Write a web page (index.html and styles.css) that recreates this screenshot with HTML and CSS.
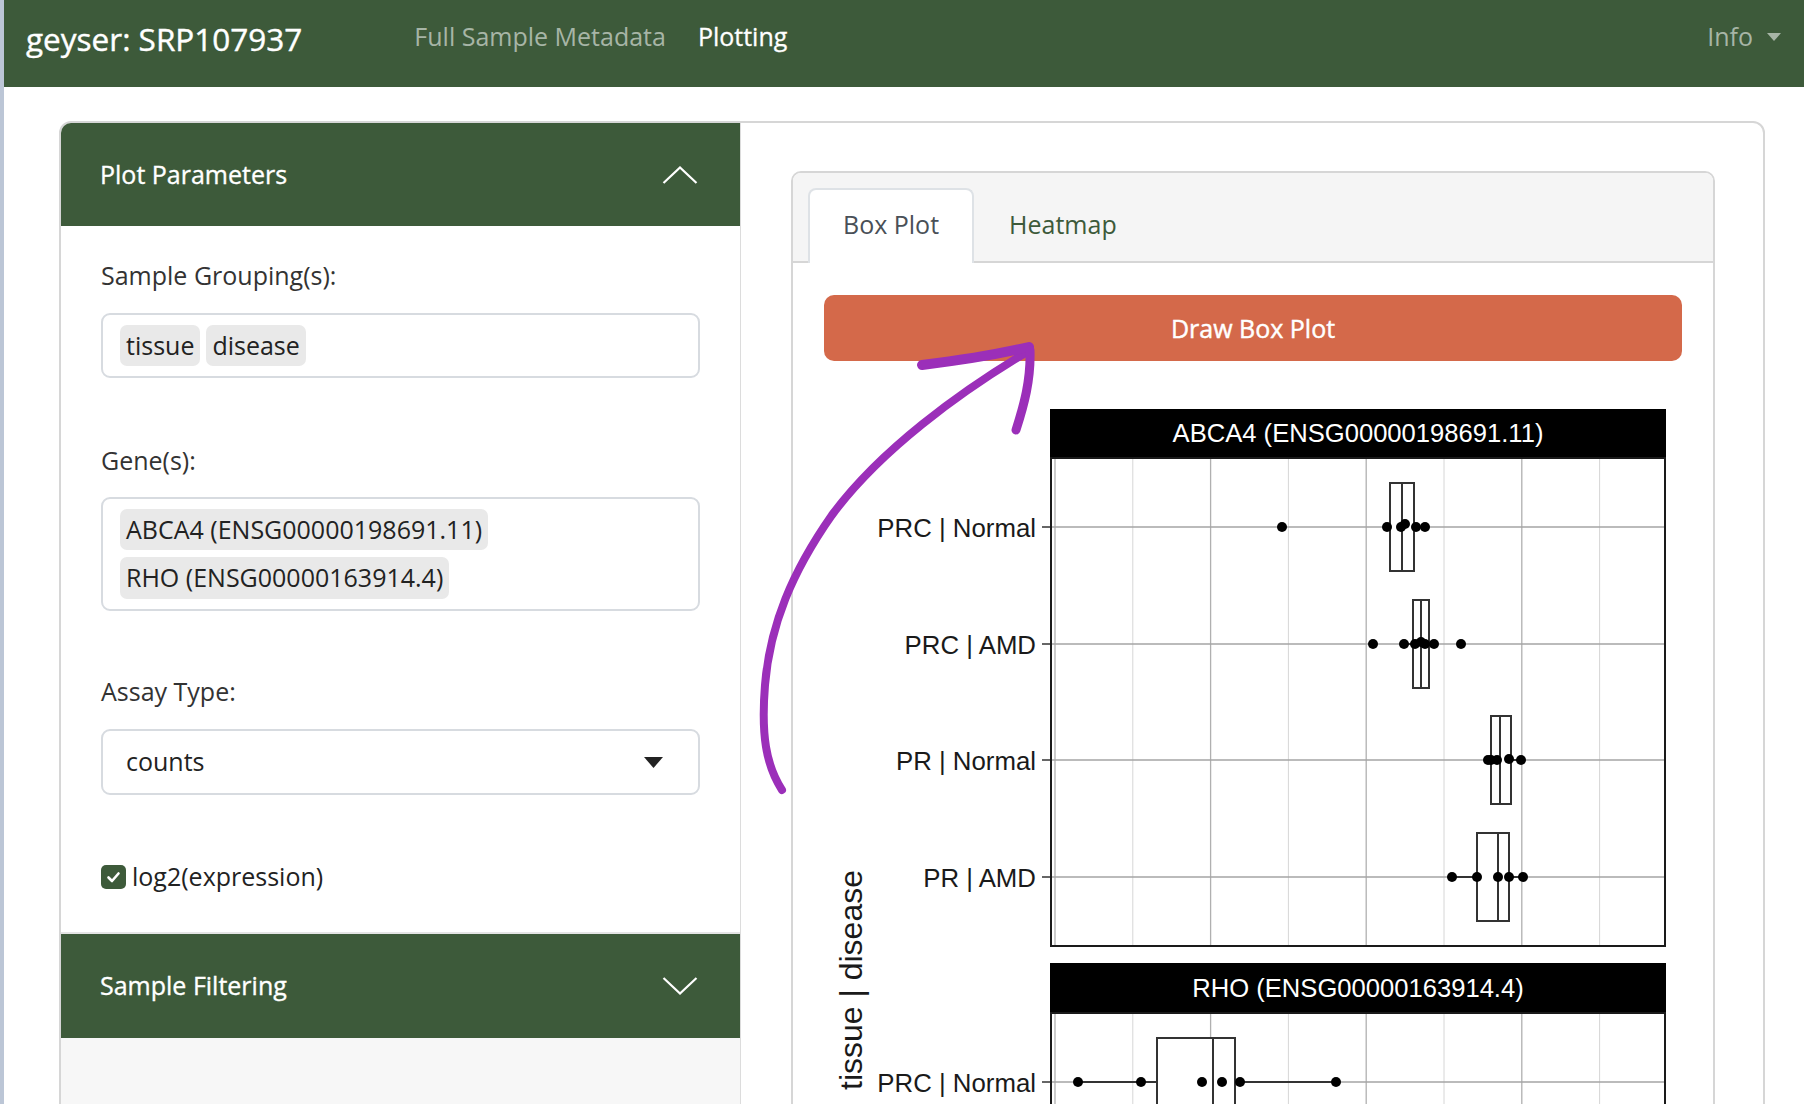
FILE: index.html
```html
<!DOCTYPE html>
<html lang="en">
<head>
<meta charset="utf-8">
<title>geyser: SRP107937</title>
<link rel="stylesheet" href="styles.css">
</head>
<body>
<nav class="navbar">
  <span class="brand">geyser: SRP107937</span>
  <ul class="nav-links">
    <li class="nav-link muted">Full Sample Metadata</li>
    <li class="nav-link active">Plotting</li>
  </ul>
  <div class="info">Info <span class="caret"></span></div>
</nav>

<main class="page">
  <div class="card">
    <aside class="sidebar">
      <div class="acc-head">
        <span>Plot Parameters</span>
        <svg class="chev" width="36" height="18" viewBox="0 0 36 18"><polyline points="1.5,17 18,1.5 34.5,17" fill="none" stroke="#fff" stroke-width="2.2"/></svg>
      </div>
      <div class="acc-body">
        <div class="field f1">
          <label class="lbl">Sample Grouping(s):</label>
          <div class="multi">
            <span class="tag">tissue</span>
            <span class="tag">disease</span>
          </div>
        </div>
        <div class="field f2">
          <label class="lbl">Gene(s):</label>
          <div class="multi">
            <span class="tag">ABCA4 (ENSG00000198691.11)</span>
            <span class="tag">RHO (ENSG00000163914.4)</span>
          </div>
        </div>
        <div class="field f3">
          <label class="lbl">Assay Type:</label>
          <div class="select">
            <span>counts</span>
            <svg width="19" height="11" viewBox="0 0 19 11"><polygon points="0,0 19,0 9.5,11" fill="#222"/></svg>
          </div>
        </div>
        <div class="check-row">
          <svg class="checkbox" width="25" height="24" viewBox="0 0 25 24"><rect x="0" y="0" width="25" height="24" rx="5" fill="#3d5a3a"/><polyline points="7.5,12.5 11,16 17.5,8.5" fill="none" stroke="#fff" stroke-width="2.6" stroke-linecap="round" stroke-linejoin="round"/></svg>
          <span>log2(expression)</span>
        </div>
      </div>
      <div class="acc-head second">
        <span>Sample Filtering</span>
        <svg class="chev" width="36" height="18" viewBox="0 0 36 18"><polyline points="1.5,1 18,16.5 34.5,1" fill="none" stroke="#fff" stroke-width="2.2"/></svg>
      </div>
      <div class="acc-rest"></div>
    </aside>

    <section class="content">
      <div class="tabcard">
        <div class="tabs">
          <div class="tab active">Box Plot</div>
          <div class="tab">Heatmap</div>
        </div>
        <div class="tabbody">
          <button class="draw-btn">Draw Box Plot</button>
          <svg class="plot" width="858" height="700" viewBox="824 409 858 700" font-family="Liberation Sans, Arial, sans-serif">
            <!-- ABCA4 panel -->
            <rect x="1050" y="409" width="616" height="49" fill="#000"/>
            <text x="1358" y="442" fill="#fff" font-size="25.6" text-anchor="middle">ABCA4 (ENSG00000198691.11)</text>
            <rect x="1051" y="458" width="614" height="488" fill="#fff"/>
            <g stroke-width="1.3">
              <line x1="1055" y1="458" x2="1055" y2="946" stroke="#b0b0b0"/>
              <line x1="1132.8" y1="458" x2="1132.8" y2="946" stroke="#d6d6d6" stroke-width="1"/>
              <line x1="1210.6" y1="458" x2="1210.6" y2="946" stroke="#b0b0b0"/>
              <line x1="1288.4" y1="458" x2="1288.4" y2="946" stroke="#d6d6d6" stroke-width="1"/>
              <line x1="1366.2" y1="458" x2="1366.2" y2="946" stroke="#b0b0b0"/>
              <line x1="1444" y1="458" x2="1444" y2="946" stroke="#d6d6d6" stroke-width="1"/>
              <line x1="1521.8" y1="458" x2="1521.8" y2="946" stroke="#b0b0b0"/>
              <line x1="1599.6" y1="458" x2="1599.6" y2="946" stroke="#d6d6d6" stroke-width="1"/>
              <line x1="1051" y1="527" x2="1665" y2="527" stroke="#a4a4a4"/>
              <line x1="1051" y1="644" x2="1665" y2="644" stroke="#a4a4a4"/>
              <line x1="1051" y1="760" x2="1665" y2="760" stroke="#a4a4a4"/>
              <line x1="1051" y1="877" x2="1665" y2="877" stroke="#a4a4a4"/>
            </g>
            <g stroke="#333" stroke-width="2">
              <line x1="1387" y1="527" x2="1425" y2="527"/>
              <rect x="1390" y="483" width="24" height="88" fill="#fff"/>
              <line x1="1402" y1="483" x2="1402" y2="571"/>
              <line x1="1404" y1="644" x2="1434" y2="644"/>
              <rect x="1413" y="600" width="16" height="88" fill="#fff"/>
              <line x1="1421" y1="600" x2="1421" y2="688"/>
              <line x1="1488" y1="760" x2="1521" y2="760"/>
              <rect x="1491" y="716" width="20" height="88" fill="#fff"/>
              <line x1="1500" y1="716" x2="1500" y2="804"/>
              <line x1="1452" y1="877" x2="1523" y2="877"/>
              <rect x="1477" y="833" width="32" height="88" fill="#fff"/>
              <line x1="1498" y1="833" x2="1498" y2="921"/>
            </g>
            <g fill="#000">
              <circle cx="1282" cy="527" r="5"/><circle cx="1387" cy="527" r="5"/><circle cx="1401" cy="527" r="5"/><circle cx="1405" cy="524" r="5"/><circle cx="1416" cy="527" r="5"/><circle cx="1425" cy="527" r="5"/>
              <circle cx="1373" cy="644" r="5"/><circle cx="1404" cy="644" r="5"/><circle cx="1415" cy="644" r="5"/><circle cx="1421" cy="642" r="5"/><circle cx="1425" cy="644" r="5"/><circle cx="1434" cy="644" r="5"/><circle cx="1461" cy="644" r="5"/>
              <circle cx="1488" cy="760" r="5"/><circle cx="1491" cy="760" r="5"/><circle cx="1497" cy="760" r="5"/><circle cx="1509" cy="759" r="5"/><circle cx="1521" cy="760" r="5"/>
              <circle cx="1452" cy="877" r="5"/><circle cx="1477" cy="877" r="5"/><circle cx="1498" cy="877" r="5"/><circle cx="1509" cy="877" r="5"/><circle cx="1523" cy="877" r="5"/>
            </g>
            <rect x="1051" y="458" width="614" height="488" fill="none" stroke="#1a1a1a" stroke-width="2"/>
            <g stroke="#333" stroke-width="1.5">
              <line x1="1042" y1="527" x2="1050" y2="527"/>
              <line x1="1042" y1="644" x2="1050" y2="644"/>
              <line x1="1042" y1="760" x2="1050" y2="760"/>
              <line x1="1042" y1="877" x2="1050" y2="877"/>
              <line x1="1042" y1="1082" x2="1050" y2="1082"/>
            </g>
            <g font-size="25.8" fill="#1a1a1a" text-anchor="end">
              <text x="1036" y="537">PRC | Normal</text>
              <text x="1036" y="654">PRC | AMD</text>
              <text x="1036" y="770">PR | Normal</text>
              <text x="1036" y="887">PR | AMD</text>
              <text x="1036" y="1092">PRC | Normal</text>
            </g>
            <!-- RHO panel -->
            <rect x="1050" y="963" width="616" height="50" fill="#000"/>
            <text x="1358" y="997" fill="#fff" font-size="25.6" text-anchor="middle">RHO (ENSG00000163914.4)</text>
            <rect x="1051" y="1013" width="614" height="490" fill="#fff"/>
            <g stroke-width="1.3">
              <line x1="1055" y1="1013" x2="1055" y2="1503" stroke="#b0b0b0"/>
              <line x1="1132.8" y1="1013" x2="1132.8" y2="1503" stroke="#d6d6d6" stroke-width="1"/>
              <line x1="1210.6" y1="1013" x2="1210.6" y2="1503" stroke="#b0b0b0"/>
              <line x1="1288.4" y1="1013" x2="1288.4" y2="1503" stroke="#d6d6d6" stroke-width="1"/>
              <line x1="1366.2" y1="1013" x2="1366.2" y2="1503" stroke="#b0b0b0"/>
              <line x1="1444" y1="1013" x2="1444" y2="1503" stroke="#d6d6d6" stroke-width="1"/>
              <line x1="1521.8" y1="1013" x2="1521.8" y2="1503" stroke="#b0b0b0"/>
              <line x1="1599.6" y1="1013" x2="1599.6" y2="1503" stroke="#d6d6d6" stroke-width="1"/>
              <line x1="1051" y1="1082" x2="1665" y2="1082" stroke="#a4a4a4"/>
            </g>
            <g stroke="#333" stroke-width="2">
              <line x1="1078" y1="1082" x2="1336" y2="1082"/>
              <rect x="1157" y="1038" width="78" height="88" fill="#fff"/>
              <line x1="1213" y1="1038" x2="1213" y2="1126"/>
            </g>
            <g fill="#000">
              <circle cx="1078" cy="1082" r="5"/><circle cx="1141" cy="1082" r="5"/><circle cx="1202" cy="1082" r="5"/><circle cx="1222" cy="1082" r="5"/><circle cx="1240" cy="1082" r="5"/><circle cx="1336" cy="1082" r="5"/>
            </g>
            <rect x="1051" y="1013" width="614" height="490" fill="none" stroke="#1a1a1a" stroke-width="2"/>
            <text transform="translate(862 980) rotate(-90)" font-size="32" fill="#1a1a1a" text-anchor="middle">tissue | disease</text>
          </svg>
        </div>
      </div>
    </section>
  </div>
</main>

<svg class="annotation" width="1804" height="1104" viewBox="0 0 1804 1104">
  <g fill="none" stroke="#9b2fb9" stroke-linecap="round" stroke-linejoin="round">
    <path d="M1027 352 C 960 392, 880 450, 832 515 C 792 572, 770 625, 765 685 C 761 735, 766 765, 782 790" stroke-width="8"/>
    <path d="M922 365 C 955 361, 995 355, 1029 347" stroke-width="10"/>
    <path d="M1030 350 C 1031 380, 1024 405, 1016 430" stroke-width="9"/>
  </g>
</svg>
</body>
</html>
```

FILE: styles.css
```css
html, body {
  margin: 0;
  padding: 0;
}

body {
  height: 1104px;
  overflow: hidden;
  font-family: "Open Sans", "Noto Sans", sans-serif;
  font-size: 25px;
  line-height: 1.5;
  color: #333;
  background: #fff;
  border-left: 4px solid #bcc6d6;
}

/* ---------- navbar ---------- */
.navbar {
  display: flex;
  align-items: center;
  height: 87px;
  box-sizing: border-box;
  padding: 0 23px 14px 22px;
  background: #3d5a3a;
}

.brand {
  font-size: 31.5px;
  color: #fff;
  margin-top: 4px;
  margin-right: 96px;
  -webkit-text-stroke: 0.4px #fff;
}

.nav-links {
  display: flex;
  list-style: none;
  margin: 0;
  padding: 0;
}

.nav-link {
  padding: 0 16px;
}

.nav-link.muted {
  color: #a7b5a6;
}

.nav-link.active {
  color: #fff;
  -webkit-text-stroke: 0.3px #fff;
}

.info {
  margin-left: auto;
  display: flex;
  align-items: center;
  gap: 14px;
  color: #a7b5a6;
}

.caret {
  width: 0;
  height: 0;
  border-left: 7px solid transparent;
  border-right: 7px solid transparent;
  border-top: 8px solid #a7b5a6;
}

/* ---------- page / card ---------- */
.page {
  padding: 34px 39px 0 55px;
}

.card {
  display: flex;
  height: 1100px;
  border: 2px solid #d6d6d6;
  border-radius: 12px;
  overflow: hidden;
}

/* ---------- sidebar ---------- */
.sidebar {
  flex: none;
  width: 679px;
  border-right: 1px solid #dcdcdc;
  display: flex;
  flex-direction: column;
}

.acc-head {
  flex: none;
  height: 103px;
  box-sizing: border-box;
  display: flex;
  align-items: center;
  justify-content: space-between;
  padding: 0 42px 0 39px;
  background: #3d5a3a;
  color: #fff;
  -webkit-text-stroke: 0.35px #fff;
}

.acc-head.second {
  height: 106px;
  border-top: 2px solid #e4e4e4;
}

.chev {
  display: block;
}

.acc-body {
  padding: 31px 40px 36px 40px;
}

.lbl {
  display: block;
  margin-bottom: 18px;
  color: #333;
}

.field.f1 { margin-bottom: 64px; }
.field.f2 { margin-bottom: 62px; }
.field.f3 { margin-bottom: 63px; }

.f2 .lbl { margin-bottom: 17px; }
.f3 .lbl { margin-bottom: 19px; }

.multi {
  display: flex;
  flex-wrap: wrap;
  gap: 7px 6px;
  border: 2px solid #d7dbe0;
  border-radius: 9px;
  padding: 10px 17px;
}

.tag {
  display: inline-block;
  background: #e9e9e9;
  border-radius: 7px;
  padding: 2px 6px;
  line-height: 37.5px;
  color: #222;
}

.select {
  height: 66px;
  box-sizing: border-box;
  display: flex;
  align-items: center;
  justify-content: space-between;
  border: 2px solid #d7dbe0;
  border-radius: 9px;
  padding: 0 35px 0 23px;
  color: #222;
}

.select svg {
  display: block;
}

.check-row {
  display: flex;
  align-items: center;
  gap: 6px;
  color: #222;
}

.checkbox {
  display: block;
  flex: none;
}

.acc-rest {
  flex: 1;
  background: #f7f7f7;
}

/* ---------- content ---------- */
.content {
  flex: 1;
  min-width: 0;
  padding: 48px 48px 0 50px;
}

.tabcard {
  height: 1000px;
  border: 2px solid #d6d6d6;
  border-radius: 10px;
  overflow: hidden;
}

.tabs {
  display: flex;
  background: #f5f5f5;
  padding: 15px 15px 0;
  border-bottom: 2px solid #d6d6d6;
}

.tab {
  padding: 16px 33px 19.5px;
  line-height: 37.5px;
  border: 2px solid transparent;
  border-bottom: 0;
  border-radius: 8px 8px 0 0;
  margin-bottom: -2px;
  color: #3d5a3a;
}

.tab.active {
  background: #fff;
  border-color: #dee2e6;
  color: #495057;
}

.tab + .tab {
  margin-left: 0;
}

.tabbody {
  padding: 32px 31px 0;
}

.draw-btn {
  display: block;
  width: 100%;
  height: 66px;
  border: 0;
  border-radius: 10px;
  background: #d4694a;
  color: #fff;
  font-family: "Open Sans", "Noto Sans", sans-serif;
  font-size: 25px;
  font-weight: 400;
  -webkit-text-stroke: 0.45px #fff;
  padding: 0;
}

.plot {
  display: block;
  margin-top: 48px;
}

/* ---------- hand-drawn annotation ---------- */
.annotation {
  position: absolute;
  left: 0;
  top: 0;
  pointer-events: none;
}
```
